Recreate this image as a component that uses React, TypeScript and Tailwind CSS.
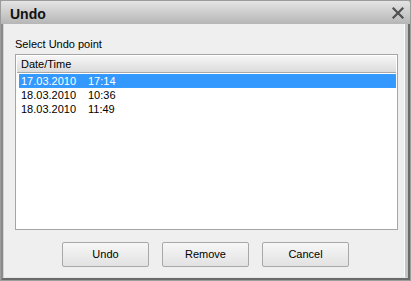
import React from "react";

export default function App() {
  const rows = [
    ["17.03.2010", "17:14"],
    ["18.03.2010", "10:36"],
    ["18.03.2010", "11:49"],
  ];
  return (
    <div
      className="w-[411px] h-[281px] bg-[#9a9a9a]"
      style={{ fontFamily: '"Liberation Sans", Arial, sans-serif' }}
    >
      <div className="w-[411px] h-[281px] flex flex-col border border-[#9c9c9c] rounded-tr-[3px] rounded-tl-[2px] overflow-hidden">
        <div className="h-[23px] shrink-0 flex items-center justify-between pl-[9px] pr-[6px] pt-[2px] bg-gradient-to-b from-[#e4e4e4] via-[#cdcdcd] to-[#b6b6b6]">
          <span className="text-[14px] font-bold text-[#111] leading-none">Undo</span>
          <svg width="12" height="12" viewBox="0 0 12 12" className="mb-[1px]">
            <path d="M1.5 1.5 L10.5 10.5 M10.5 1.5 L1.5 10.5" stroke="#4f4f4f" strokeWidth="2.2" strokeLinecap="square" />
          </svg>
        </div>
        <div className="flex-1 flex flex-col border-l-2 border-r-2 border-b-2 border-l-[#8a8a8a] border-r-[#6a6a6a] border-b-[#6a6a6a]">
          <div className="flex-1 flex flex-col border-l border-r-[3px] border-b border-l-[#d2d2d2] border-r-[#c4c4c4] border-b-[#e6e6e6] bg-[#efefef]">
            <div className="flex-1 flex flex-col pl-[11px] pr-[6px] pt-[14px] border-r border-r-[#fbfbfb]">
              <div className="text-[11px] text-black leading-[13px]">Select Undo point</div>
              <div className="mt-[3px] h-[176px] bg-white border border-[#a5a5a5] p-[1px]">
                <div className="h-[17px] flex items-center pl-[4px] text-[11px] text-black bg-gradient-to-b from-[#f6f6f6] to-[#dcdcdc] border-b border-[#a8a8a8]">
                  Date/Time
                </div>
                <div className="pt-[1px]">
                  {rows.map((r, i) => (
                    <div
                      key={i}
                      className={
                        "h-[14px] ml-[2px] flex items-center pl-[2px] text-[11px] leading-[13px] " +
                        (i === 0
                          ? "bg-[#3399ff] text-white outline-1 outline-dotted outline-[#c08040] -outline-offset-1"
                          : "text-black")
                      }
                    >
                      <span className="w-[67px]">{r[0]}</span>
                      <span>{r[1]}</span>
                    </div>
                  ))}
                </div>
              </div>
              <div className="flex justify-center gap-[13px] mt-[12px] pr-[2px]">
                {["Undo", "Remove", "Cancel"].map((b) => (
                  <div
                    key={b}
                    className="w-[87px] h-[25px] flex items-center justify-center text-[11px] text-black border border-[#a8a8a8] rounded-[2px] bg-gradient-to-b from-[#f7f7f7] to-[#e2e2e2]"
                  >
                    {b}
                  </div>
                ))}
              </div>
            </div>
          </div>
        </div>
      </div>
    </div>
  );
}
